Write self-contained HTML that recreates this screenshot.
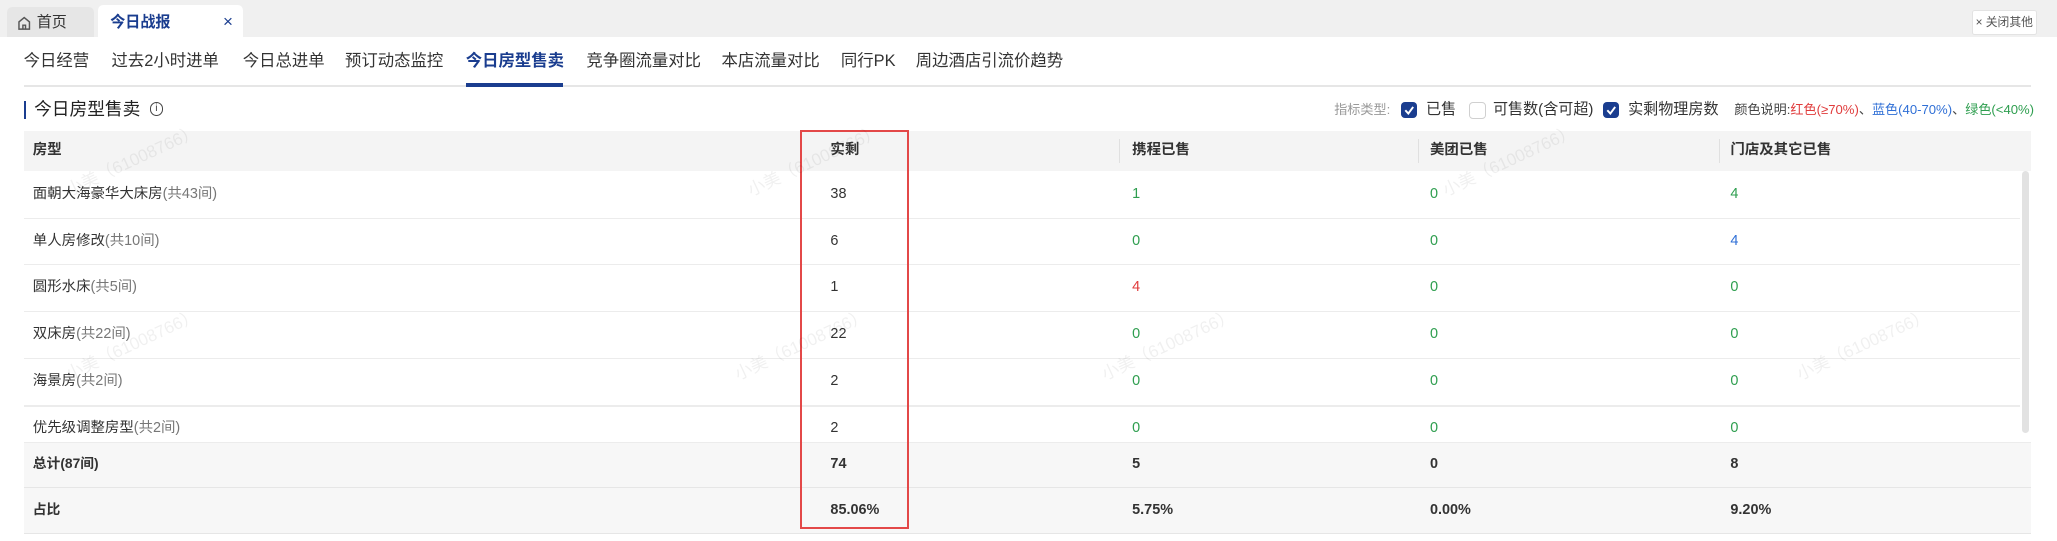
<!DOCTYPE html>
<html><head><meta charset="utf-8"><style>
html,body{margin:0;padding:0}
body{width:2057px;height:540px;overflow:hidden;background:#fff;font-family:"Liberation Sans","Noto Sans CJK SC",sans-serif;}
#w{zoom:1.3119;width:1568px;height:412px;position:relative;color:#333}
.a{position:absolute;white-space:nowrap}
.top{left:0;top:0;width:1568px;height:28px;background:#f0f0f0}
.nav{top:38px;height:18px;line-height:18px;font-size:12.5px;color:#333}
.cb{width:12px;height:12px;border-radius:3px;top:78px}
.on{background:#1a3d8f}
.off{border:1px solid #d0d0d0;width:11px;height:11px;background:#fff}
.cell{font-size:11px;height:16px;line-height:16px}
.g{color:#2e9e4f}.b{color:#2f6fd6}.r{color:#e03c3c}
.wm{color:rgba(0,0,0,0.06);font-size:13px;transform:rotate(-25deg);transform-origin:left center}
.bd{font-weight:bold}
</style></head><body><div id="w">
<div class="a top"></div>
<div class="a" style="left:5px;top:5px;width:67px;height:23px;background:#e6e6e6;border-radius:4px 4px 0 0"></div>
<svg class="a" style="left:13px;top:12px" width="11" height="11" viewBox="0 0 11 11"><path d="M1.5 10V4.5L5.5 1.2L9.5 4.5V10Z M4.5 10V7H6.5V10" fill="none" stroke="#555" stroke-width="1.1"/></svg>
<div class="a" style="left:28px;top:10px;height:16px;line-height:16px;font-size:11.5px;color:#333">首页</div>
<div class="a" style="left:75px;top:4px;width:110px;height:24px;background:#fff;border-radius:4px 4px 0 0"></div>
<div class="a" style="left:84px;top:10px;height:16px;line-height:16px;font-size:11.5px;color:#1a3d8f;font-weight:bold">今日战报</div>
<div class="a" style="left:170px;top:9px;font-size:13px;line-height:16px;color:#1a3d8f">×</div>
<div class="a" style="left:1503px;top:8px;width:48px;height:17px;background:#fff;border:1px solid #e3e3e3;border-radius:2px;font-size:9px;line-height:17px;text-align:center;color:#555">× 关闭其他</div>

<div class="a nav" style="left:18px">今日经营</div>
<div class="a nav" style="left:85px">过去2小时进单</div>
<div class="a nav" style="left:185px">今日总进单</div>
<div class="a nav" style="left:263px">预订动态监控</div>
<div class="a nav" style="left:355px;color:#1a3d8f;font-weight:bold">今日房型售卖</div>
<div class="a nav" style="left:447px">竞争圈流量对比</div>
<div class="a nav" style="left:550px">本店流量对比</div>
<div class="a nav" style="left:641px">同行PK</div>
<div class="a nav" style="left:698px">周边酒店引流价趋势</div>
<div class="a" style="left:18px;top:65px;width:1530px;height:1px;background:#e6e6e6"></div>
<div class="a" style="left:355px;top:63px;width:74px;height:3px;background:#1a3d8f"></div>

<div class="a" style="left:18px;top:77px;width:2px;height:14px;background:#1a3d8f"></div>
<div class="a" style="left:26px;top:75px;height:18px;line-height:18px;font-size:13.5px;color:#222">今日房型售卖</div>
<div class="a" style="left:114px;top:78px;width:9px;height:9px;border:1px solid #444;border-radius:50%;font-size:8px;line-height:9px;text-align:center;color:#444">i</div>

<div class="a" style="left:1017px;top:77px;font-size:10px;line-height:14px;color:#999">指标类型:</div>
<div class="a cb on" style="left:1068px"></div>
<svg class="a" style="left:1070px;top:80px" width="8" height="8"><path d="M1 4L3.3 6.5L7 1.5" fill="none" stroke="#fff" stroke-width="1.5"/></svg>
<div class="a" style="left:1087px;top:76px;font-size:11.5px;line-height:16px">已售</div>
<div class="a cb off" style="left:1120px"></div>
<div class="a" style="left:1138px;top:76px;font-size:11.5px;line-height:16px">可售数(含可超)</div>
<div class="a cb on" style="left:1222px"></div>
<svg class="a" style="left:1224px;top:80px" width="8" height="8"><path d="M1 4L3.3 6.5L7 1.5" fill="none" stroke="#fff" stroke-width="1.5"/></svg>
<div class="a" style="left:1241px;top:76px;font-size:11.5px;line-height:16px">实剩物理房数</div>
<div class="a" style="left:1322px;top:77px;font-size:10px;line-height:14px;color:#444">颜色说明:<span class="r">红色(≥70%)</span>、<span class="b">蓝色(40-70%)</span>、<span class="g">绿色(&lt;40%)</span></div>

<div class="a" style="left:18px;top:100px;width:1530px;height:30px;background:#f4f4f4"></div>
<div class="a" style="left:853px;top:106px;width:1px;height:18px;background:#e0e0e0"></div>
<div class="a" style="left:1081px;top:106px;width:1px;height:18px;background:#e0e0e0"></div>
<div class="a" style="left:1310px;top:106px;width:1px;height:18px;background:#e0e0e0"></div>
<div class="a cell bd" style="left:25px;top:107px">房型</div>
<div class="a cell bd" style="left:633px;top:107px">实剩</div>
<div class="a cell bd" style="left:863px;top:107px">携程已售</div>
<div class="a cell bd" style="left:1090px;top:107px">美团已售</div>
<div class="a cell bd" style="left:1319px;top:107px">门店及其它已售</div>

<div class="a" style="left:18px;top:337px;width:1530px;height:69px;background:#f7f7f7"></div>
<div class="a" style="left:18px;top:166px;width:1522px;height:1px;background:#ececec"></div>
<div class="a" style="left:18px;top:201px;width:1522px;height:1px;background:#ececec"></div>
<div class="a" style="left:18px;top:237px;width:1522px;height:1px;background:#ececec"></div>
<div class="a" style="left:18px;top:273px;width:1522px;height:1px;background:#ececec"></div>
<div class="a" style="left:18px;top:309px;width:1522px;height:1px;background:#ececec"></div>
<div class="a" style="left:18px;top:337px;width:1530px;height:1px;background:#ececec"></div>
<div class="a" style="left:18px;top:371px;width:1530px;height:1px;background:#e6e6e6"></div>
<div class="a" style="left:18px;top:406px;width:1530px;height:1px;background:#e6e6e6"></div>
<div class="a" style="left:1541px;top:130px;width:6px;height:200px;background:#e2e2e2;border-radius:3px"></div>

<div class="a cell" style="left:25px;top:140px">面朝大海豪华大床房<span style="color:#777">(共43间)</span></div>
<div class="a cell" style="left:633px;top:140px">38</div><div class="a cell g" style="left:863px;top:140px">1</div><div class="a cell g" style="left:1090px;top:140px">0</div><div class="a cell g" style="left:1319px;top:140px">4</div>
<div class="a cell" style="left:25px;top:176px">单人房修改<span style="color:#777">(共10间)</span></div>
<div class="a cell" style="left:633px;top:176px">6</div><div class="a cell g" style="left:863px;top:176px">0</div><div class="a cell g" style="left:1090px;top:176px">0</div><div class="a cell b" style="left:1319px;top:176px">4</div>
<div class="a cell" style="left:25px;top:211px">圆形水床<span style="color:#777">(共5间)</span></div>
<div class="a cell" style="left:633px;top:211px">1</div><div class="a cell r" style="left:863px;top:211px">4</div><div class="a cell g" style="left:1090px;top:211px">0</div><div class="a cell g" style="left:1319px;top:211px">0</div>
<div class="a cell" style="left:25px;top:247px">双床房<span style="color:#777">(共22间)</span></div>
<div class="a cell" style="left:633px;top:247px">22</div><div class="a cell g" style="left:863px;top:247px">0</div><div class="a cell g" style="left:1090px;top:247px">0</div><div class="a cell g" style="left:1319px;top:247px">0</div>
<div class="a cell" style="left:25px;top:283px">海景房<span style="color:#777">(共2间)</span></div>
<div class="a cell" style="left:633px;top:283px">2</div><div class="a cell g" style="left:863px;top:283px">0</div><div class="a cell g" style="left:1090px;top:283px">0</div><div class="a cell g" style="left:1319px;top:283px">0</div>
<div class="a cell" style="left:25px;top:319px">优先级调整房型<span style="color:#777">(共2间)</span></div>
<div class="a cell" style="left:633px;top:319px">2</div><div class="a cell g" style="left:863px;top:319px">0</div><div class="a cell g" style="left:1090px;top:319px">0</div><div class="a cell g" style="left:1319px;top:319px">0</div>
<div class="a cell bd" style="left:25px;top:346px;font-size:10.5px">总计(87间)</div>
<div class="a cell bd" style="left:633px;top:346px">74</div><div class="a cell bd" style="left:863px;top:346px">5</div><div class="a cell bd" style="left:1090px;top:346px">0</div><div class="a cell bd" style="left:1319px;top:346px">8</div>
<div class="a cell bd" style="left:25px;top:381px;font-size:10.5px">占比</div>
<div class="a cell bd" style="left:633px;top:381px">85.06%</div><div class="a cell bd" style="left:863px;top:381px">5.75%</div><div class="a cell bd" style="left:1090px;top:381px">0.00%</div><div class="a cell bd" style="left:1319px;top:381px">9.20%</div>

<div class="a" style="left:610px;top:99px;width:80px;height:301px;border:2px solid #e34848"></div>

<div class="a wm" style="left:50px;top:135px">小美（61008766）</div>
<div class="a wm" style="left:570px;top:135px">小美（61008766）</div>
<div class="a wm" style="left:1100px;top:135px">小美（61008766）</div>
<div class="a wm" style="left:50px;top:275px">小美（61008766）</div>
<div class="a wm" style="left:560px;top:275px">小美（61008766）</div>
<div class="a wm" style="left:840px;top:275px">小美（61008766）</div>
<div class="a wm" style="left:1370px;top:275px">小美（61008766）</div>
</div></body></html>
